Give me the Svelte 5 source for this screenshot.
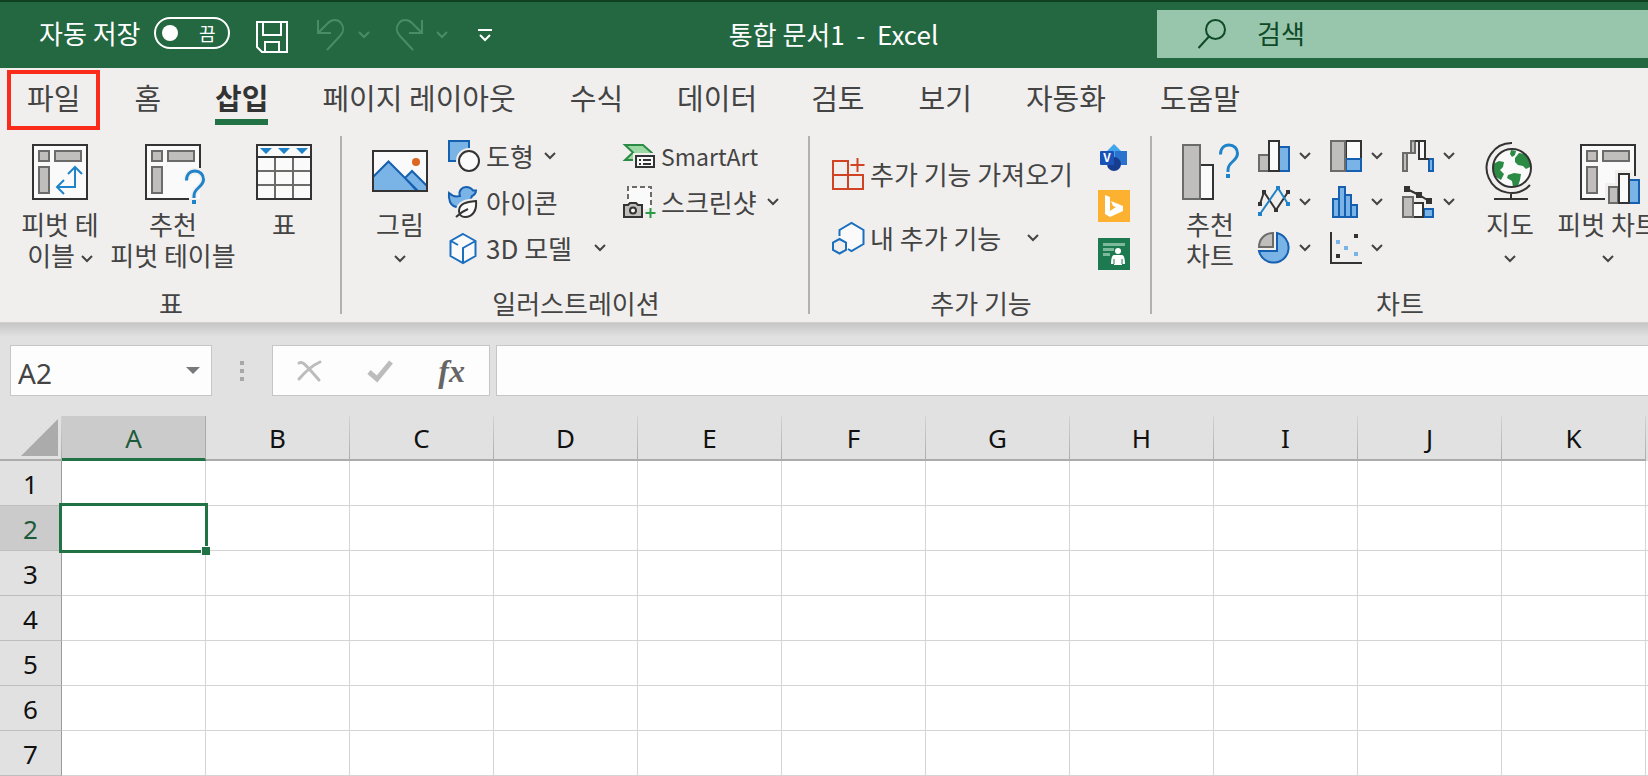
<script>
  const tabs = ['파일', '홈', '삽입', '페이지 레이아웃', '수식', '데이터', '검토', '보기', '자동화', '도움말'];
  const active = '삽입';
  const framed = '파일';
  const columns = ['A', 'B', 'C', 'D', 'E', 'F', 'G', 'H', 'I', 'J', 'K'];
  const rows = [1, 2, 3, 4, 5, 6, 7];
  const selected = { column: 'A', row: 2 };
  let cellName = $state('A2');
  let formula = $state('');
  let autosave = $state(false);
</script>

{#snippet chevron()}
  <svg class="chevron" width="12" height="8" viewBox="0 0 12 8" aria-hidden="true"><path d="M1 1l5 5 5-5" /></svg>
{/snippet}

{#snippet question(x, y)}
  <g transform="translate({x} {y})">
    <path class="halo" d="M1.500 10.500C1.500 4.500 5 1 10 1s8.500 3.500 8.500 8.500C18.500 17 9 18 9 25.500V28" />
    <path class="azure bold" d="M1.500 10.500C1.500 4.500 5 1 10 1s8.500 3.500 8.500 8.500C18.500 17 9 18 9 25.500V28" />
    <rect x="7" y="30" width="4" height="4" fill="#1e83c9" />
  </g>
{/snippet}

{#snippet pivotBlocks()}
  <g class="gray">
    <rect x="7" y="7" width="10" height="10" />
    <rect x="23" y="7" width="26" height="10" />
    <rect x="7" y="23" width="10" height="26" />
  </g>
{/snippet}

<div class="app">
  <header class="titlebar">
    <div class="quick">
      <label class="autosave">
        <span class="caption">자동 저장</span>
        <input type="checkbox" role="switch" bind:checked={autosave} />
        <span class="switch"><i></i><b>끔</b></span>
      </label>
      <button class="save" aria-label="저장">
        <svg width="32" height="32" viewBox="0 0 32 32"><path d="M1 1h30v30H6l-5-5zM7 1v13h18V1M9 31V21h14v10" /></svg>
      </button>
      <button class="faded" aria-label="실행 취소">
        <svg width="30" height="34" viewBox="0 0 30 34"><path d="M2 2v13h13M2 15L12 5c4-4 10-4 13 0s3 9-1 13L11 32" /></svg>
        {@render chevron()}
      </button>
      <button class="faded redo" aria-label="다시 실행">
        <svg width="30" height="34" viewBox="0 0 30 34"><path d="M28 2v13H15M28 15L18 5C14 1 8 1 5 5s-3 9 1 13l13 14" /></svg>
        {@render chevron()}
      </button>
      <button class="more" aria-label="빠른 실행 도구 모음">
        <svg width="14" height="14" viewBox="0 0 14 14"><path d="M0 2h14M2 7l5 5 5-5" /></svg>
      </button>
    </div>
    <h1>통합 문서1 &nbsp;- &nbsp;Excel</h1>
    <label class="search">
      <svg width="30" height="32" viewBox="0 0 30 32" aria-hidden="true"><circle cx="18.500" cy="11.500" r="9.500" /><path d="M12 18.500L1.500 30" /></svg>
      <input type="search" placeholder="검색" aria-label="검색" />
    </label>
  </header>

  <nav class="tabs">
    {#each tabs as tab}
      <button class:framed={tab === framed} class:active={tab === active}><span>{tab}</span></button>
    {/each}
  </nav>

  <div class="ribbon">
    <section class="group tables">
      <div class="body">
        <button class="big">
          <svg width="56" height="56" viewBox="0 0 56 56"><rect class="white" x="1" y="1" width="54" height="54" />{@render pivotBlocks()}<path class="azure" d="M43 23v20H25M36 30l7-7 7 7M32 36l-7 7 7 7" /></svg>
          <span>피벗 테<br />이블 {@render chevron()}</span>
        </button>
        <button class="big wide">
          <svg width="56" height="56" viewBox="0 0 56 56"><rect x="1" y="1" width="54" height="54" fill="#fafafa" />{@render pivotBlocks()}<path class="dark" d="M55 24V1H1v54h43" />{@render question(40, 26)}</svg>
          <span>추천<br />피벗 테이블</span>
        </button>
        <button class="big">
          <svg width="56" height="56" viewBox="0 0 56 56">
            <rect x="1" y="1" width="54" height="54" fill="#fafafa" />
            <path d="M19 14v41M37 14v41M1 27h54M1 41h54" fill="none" stroke="#6b6b69" stroke-width="2" />
            <path class="dark" d="M1 1h54v54H1zM1 13h54" />
            <path d="M4 4h12l-6 6zM22 4h12l-6 6zM40 4h12l-6 6z" fill="#1e83c9" />
          </svg>
          <span>표</span>
        </button>
      </div>
      <h2>표</h2>
    </section>

    <section class="group pictures">
      <div class="body">
        <button class="big">
          <svg width="56" height="56" viewBox="0 0 56 56">
            <rect x="1" y="7" width="54" height="40" fill="#fafafa" />
            <circle cx="44" cy="18" r="4" fill="#dd6620" />
            <path class="blue" d="M33 34l7-7 15 15v5H45zM1 33l15.500-15.500L46 47H1z" />
            <rect class="dark" x="1" y="7" width="54" height="40" />
          </svg>
          <span>그림<br />{@render chevron()}</span>
        </button>
        <div class="rows first">
          <button>
            <svg width="32" height="32" viewBox="0 0 32 32"><rect class="blue" x="1" y="1" width="20" height="20" /><circle cx="21" cy="21" r="13" fill="#f1efee" /><circle class="white" cx="21" cy="21" r="10" /></svg>
            <span>도형</span>{@render chevron()}
          </button>
          <button>
            <svg width="32" height="32" viewBox="0 0 32 32">
              <path class="blue" d="M1 7c3 3 7 4 11 3C10 5 14 1 18 1c4 0 6 2 7 3.500h3C28 8 26 9 24 10c-1 5-5 8-9 11-6 1-11-1-13-5C1 13 .5 10 1 7z" />
              <path class="halo" d="M28 15c-9 1-17 2-17 10 0 4 3 6 6 6 8 0 12-7 11-16z" />
              <path class="white" d="M28 15c-9 1-17 2-17 10 0 4 3 6 6 6 8 0 12-7 11-16zM8 31c4-4 7-6 12-8" />
            </svg>
            <span>아이콘</span>
          </button>
          <button class="apart">
            <svg width="32" height="32" viewBox="0 0 32 32"><path d="M15 2l12.500 7v15L15 31 2.500 24V9z" fill="#fafafa" /><path class="line-blue" d="M15 2l12.500 7v15L15 31 2.500 24V9zM27.500 9L15 16v15M3 9l7 4" /></svg>
            <span>3D 모델</span>{@render chevron()}
          </button>
        </div>
        <div class="rows">
          <button>
            <svg width="32" height="32" viewBox="0 0 32 32"><path d="M2 5h18l9 8v1H12v6H2l8-7.500z" fill="#9bd8a4" stroke="#2b8a44" stroke-width="2" /><path class="halo" d="M13 16h18v11H13z" /><path class="white" d="M13 16h18v11H13z" /><path class="dark" d="M16 20h2M20 20h8M16 24h2M20 24h8" /></svg>
            <span class="latin">SmartArt</span>
          </button>
          <button>
            <svg width="32" height="32" viewBox="0 0 32 32">
              <rect x="5" y="1" width="23" height="22" fill="#fafafa" />
              <path d="M5 13V1h23v20" fill="none" stroke="#6b6b69" stroke-width="2" stroke-dasharray="5 3" />
              <path d="M1 19h4l2-2h6l2 2h4v12H1z" fill="#bfbebc" stroke="#333" stroke-width="2" />
              <circle class="white" cx="10" cy="24.500" r="3" />
              <path d="M27.500 22v10M22.500 27h10" stroke="#2b9a48" stroke-width="2" />
            </svg>
            <span>스크린샷</span>{@render chevron()}
          </button>
        </div>
      </div>
      <h2>일러스트레이션</h2>
    </section>

    <section class="group addins">
      <div class="body">
        <div class="rows tall">
          <button>
            <svg width="32" height="32" viewBox="0 0 32 32"><path d="M1 3h15v28H1zM1 17h30v14H1zM25.500 0v14M18.500 7h14" fill="none" stroke="#d04424" stroke-width="2" /></svg>
            <span>추가 기능 가져오기</span>
          </button>
          <button class="apart">
            <svg width="32" height="32" viewBox="0 0 32 32"><path d="M7.500 14V8l12-7L32 8v14l-12.500 7-3.500-2z" fill="#fafafa" /><path class="line-blue" d="M7.500 14V8l12-7L31.500 8v14l-12 7-3.500-2M7.500 17l6.500 3.500v7.500l-6.500 3.500L1 28v-7.500z" /></svg>
            <span>내 추가 기능</span>{@render chevron()}
          </button>
        </div>
        <div class="apps">
          <button aria-label="Visio">
            <svg width="32" height="32" viewBox="0 0 32 32"><path d="M16 2l8 8-8 8-8-8z" fill="#41a5ee" /><path d="M17 9h12v14H17z" fill="#2b72cf" /><circle cx="16" cy="22" r="7" fill="#163d8f" /><rect x="2" y="9" width="14" height="14" rx="1" fill="#1a52b8" /><text x="9" y="20" text-anchor="middle" font-size="12" font-weight="700" fill="#fff">V</text></svg>
          </button>
          <button aria-label="Bing 지도">
            <svg width="32" height="32" viewBox="0 0 32 32"><path d="M0 0h32v32H0z" fill="#fcb131" /><path d="M7 5l5 2v14l6-4-3-1-2-5 12 5v5l-13 6-5-3z" fill="#fff" /></svg>
          </button>
          <button aria-label="피플 그래프">
            <svg width="32" height="32" viewBox="0 0 32 32"><path d="M0 0h32v32H0z" fill="#1d7a50" /><path d="M5 6.500h22M5 11.500h11M5 16.500h7" stroke="#7db99b" stroke-width="3" /><circle cx="20" cy="13" r="3" fill="#fff" /><path d="M16 17h8c2 0 3 4 3 9h-3v1h-8v-1h-3c0-5 1-9 3-9z" fill="#fff" /><path d="M16 21v5M24 21v5" stroke="#1d7a50" /></svg>
          </button>
        </div>
      </div>
      <h2>추가 기능</h2>
    </section>

    <section class="group charts">
      <div class="body">
        <button class="big">
          <svg width="56" height="56" viewBox="0 0 56 56"><rect class="white" x="18" y="21" width="13" height="34" /><rect class="gray" x="1" y="1" width="17" height="54" />{@render question(37, 0)}</svg>
          <span>추천<br />차트</span>
        </button>
        <div class="gallery">
          <button aria-label="세로 막대형 차트">
            <svg width="32" height="32" viewBox="0 0 32 32"><path class="gray" d="M1 15h10v16H1z" /><path class="blue" d="M21 7h10v24H21z" /><path class="white" d="M11 1h10v30H11z" /></svg>{@render chevron()}
          </button>
          <button aria-label="계층 구조 차트">
            <svg width="32" height="32" viewBox="0 0 32 32"><path class="white" d="M16 1h15v18H16z" /><path class="blue" d="M16 19h15v12H16z" /><path class="gray" d="M1 1h14v30H1z" /></svg>{@render chevron()}
          </button>
          <button aria-label="폭포 차트">
            <svg width="32" height="32" viewBox="0 0 32 32"><path class="gray" d="M1 13h4v18H1zM9 1h4v12H9zM5 13h4" /><path class="blue" d="M27 19h4v12h-4z" /><path class="white" d="M17 1h6v18h-6zM13 1h4M23 19h4" /></svg>{@render chevron()}
          </button>
          <button aria-label="꺾은선형 차트">
            <svg width="32" height="32" viewBox="0 0 32 32"><path class="dark" d="M2 18L6 6l12 18L30 6" /><path class="azure" d="M2 28L20 2l10 16" /><path d="M0 16h4v4H0zM4 4h4v4H4zM16 22h4v4h-4zM28 4h4v4h-4z" fill="#333" /><path d="M0 26h4v4H0zM18 0h4v4h-4zM28 16h4v4h-4z" fill="#1e83c9" /></svg>{@render chevron()}
          </button>
          <button aria-label="통계 차트">
            <svg width="32" height="32" viewBox="0 0 32 32"><path class="blue" d="M3 13h6v18H3zM9 1h6v30H9zM15 9h6v22h-6zM21 19h6v12h-6z" /></svg>{@render chevron()}
          </button>
          <button aria-label="혼합 차트">
            <svg width="32" height="32" viewBox="0 0 32 32"><path class="blue" d="M22 23h9v8h-9z" /><path class="white" d="M11 17h10v14H11z" /><path class="gray" d="M1 11h10v20H1z" /><path class="dark" d="M5 3l12 6 10 6" /><path d="M2 0h6v6H2zM14 6h6v6h-6zM24 12h6v6h-6z" fill="#333" /></svg>{@render chevron()}
          </button>
          <button aria-label="원형 차트">
            <svg width="32" height="32" viewBox="0 0 32 32"><path class="gray" d="M15 15V1C7 1 1 7 1 15z" /><path class="blue" d="M19 1v18H1a15 15 0 1 0 18-18z" /></svg>{@render chevron()}
          </button>
          <button aria-label="분산형 차트">
            <svg width="32" height="32" viewBox="0 0 32 32"><path class="dark" d="M1 0v31h31" /><path d="M24 2h4v4h-4zM6 22h4v4H6z" fill="#333" /><path d="M6 8h4v4H6zM14 14h4v4h-4zM24 20h4v4h-4z" fill="#7ab3e5" /></svg>{@render chevron()}
          </button>
        </div>
        <button class="big">
          <svg width="56" height="56" viewBox="0 0 56 56">
            <circle cx="30" cy="24" r="19" fill="#fafafa" />
            <path d="M29 6l5 1-1 4-3 2-2-3zM33 14l4-5 6 1 5 7v6l-4 2-3-3-5-1-3-3zM11 20l6-3 5 1-1 5-3 3 4 4-3 6-5-3-3-7zM26 31l6-2 7 1-1 6-2 6-5 1-1-6-5-3z" fill="#2b8a44" />
            <circle class="dark" cx="30" cy="24" r="19" />
            <path class="dark" d="M30-1a25 25 0 1 0 18 42M29 49v6M12 55h34" />
          </svg>
          <span>지도<br />{@render chevron()}</span>
        </button>
        <button class="big wide">
          <svg width="56" height="56" viewBox="0 0 56 56"><path d="M1 1h54v54H1z" fill="#fafafa" />{@render pivotBlocks()}<path class="dark" d="M55 32V1H1v54h25" /><path class="halo" d="M28 42h10V29h12v6h9v24H28z" /><path class="gray" d="M29 43h9v16h-9z" /><path class="blue" d="M49 36h10v23H49z" /><path class="white" d="M39 30h10v29H39z" /></svg>
          <span>피벗 차트<br />{@render chevron()}</span>
        </button>
      </div>
      <h2>차트</h2>
    </section>
  </div>

  <div class="formulabar">
    <div class="namebox">
      <input aria-label="이름 상자" bind:value={cellName} />
      <button aria-label="이름 목록"><svg width="14" height="7" viewBox="0 0 14 7"><path d="M0 0h14L7 7z" fill="#777a7d" /></svg></button>
    </div>
    <div class="grip"><i></i><i></i><i></i></div>
    <div class="actions">
      <button aria-label="취소"><svg width="24" height="22" viewBox="0 0 24 22"><path d="M2 3c4-2 6 1 20 17M2 19C8 12 14 6 23 2" fill="none" stroke="#bcbcbc" stroke-width="3" stroke-linecap="round" /></svg></button>
      <button aria-label="입력"><svg width="26" height="22" viewBox="0 0 26 22"><path d="M2 12l8 7L24 2" fill="none" stroke="#bcbcbc" stroke-width="5" /></svg></button>
      <button class="fx" aria-label="함수 삽입">fx</button>
    </div>
    <input class="formula" aria-label="수식 입력줄" bind:value={formula} />
  </div>

  <table class="sheet">
    <colgroup>
      <col class="c-head" />
      {#each columns as c}<col class="c-cell" />{/each}
      <col />
    </colgroup>
    <thead>
      <tr>
        <th class="corner"><svg width="37" height="37" viewBox="0 0 37 37" aria-hidden="true"><path d="M37 0v37H0z" fill="#ababab" /></svg></th>
        {#each columns as c}<th scope="col" class:sel={c === selected.column}>{c}</th>{/each}
        <th class="rest"></th>
      </tr>
    </thead>
    <tbody>
      {#each rows as r}
        <tr>
          <th scope="row" class:sel={r === selected.row}>{r}</th>
          {#each columns as c}
            <td>{#if r === selected.row && c === selected.column}<div class="cursor"></div>{/if}</td>
          {/each}
          <td></td>
        </tr>
      {/each}
    </tbody>
  </table>
</div>

<style>
  :global(body) { background: #e1e1e1; overflow: hidden; }
  .app { font-family: "Noto Sans CJK KR", "Noto Sans", sans-serif; font-size: 26px; color: #444; overflow: hidden; }
  button { border: 0; padding: 0; background: none; font: inherit; color: inherit; cursor: pointer; }
  input { font: inherit; color: inherit; border: 0; padding: 0; background: none; outline: 0; min-width: 0; border-radius: 0; }
  svg { display: block; flex: none; overflow: visible; }
  h1, h2 { margin: 0; font-size: 26px; font-weight: 400; }

  .chevron path { fill: none; stroke: currentColor; stroke-width: 2; }
  .white { fill: #fafafa; stroke: #333; stroke-width: 2; }
  .dark { fill: none; stroke: #333; stroke-width: 2; }
  .gray, .gray rect { fill: #bfbebc; stroke: #6b6b69; stroke-width: 2; }
  .blue { fill: #7ab3e5; stroke: #1560b0; stroke-width: 2; }
  .line-blue { fill: none; stroke: #1b6fbf; stroke-width: 2; }
  .azure { fill: none; stroke: #1e83c9; stroke-width: 2; }
  .bold { stroke-width: 3; }
  .halo { fill: none; stroke: #f1efee; stroke-width: 6; }

  .titlebar { display: grid; grid-template-columns: 510px 1fr 491px; align-items: center; height: 66px; border-top: 2px solid #0f4020; background: #246841; color: #fff; }
  .quick { display: flex; align-items: center; padding-left: 39px; }
  .quick svg path { fill: none; stroke: currentColor; stroke-width: 2; }
  .autosave { display: flex; align-items: center; gap: 13px; line-height: 32px; }
  .autosave .caption { padding-bottom: 4px; }
  .autosave input { position: absolute; opacity: 0; }
  .switch { display: flex; align-items: center; justify-content: space-between; box-sizing: border-box; width: 76px; height: 32px; margin-bottom: 4px; padding: 0 12px 0 6px; border: 2px solid #fff; border-radius: 16px; }
  .switch i { width: 16px; height: 16px; border-radius: 50%; background: #fff; }
  .switch b { font-size: 18px; font-weight: 400; line-height: 28px; }
  .save { margin: 4px 28px 0 26px; }
  .faded { display: flex; align-items: center; gap: 12px; color: #4a8c63; margin-right: 24px; }
  .more { margin-left: 6px; }
  h1 { padding-bottom: 2px; text-align: center; white-space: pre; line-height: 36px; }
  .search { display: flex; align-items: center; gap: 30px; height: 48px; padding-left: 40px; margin-bottom: 2px; background: #98c6ad; color: #0f4a27; }
  .search svg * { fill: none; stroke: #0f4a27; stroke-width: 2; }
  .search input { flex: 1; padding-bottom: 4px; appearance: none; }
  .search input::placeholder { color: #0f4a27; opacity: 1; }

  .tabs { display: flex; gap: 14px; height: 65px; padding-left: 7px; box-sizing: border-box; padding-top: 2px; background: #f1efee; }
  .tabs button { box-sizing: border-box; height: 60px; padding: 0 16px; border: 4px solid transparent; font-size: 29px; line-height: 44px; white-space: nowrap; }
  .tabs span { display: block; height: 44px; border-bottom: 6px solid transparent; }
  .tabs .framed { border-color: #fb2b1b; }
  .tabs .active { font-weight: 700; color: #333; }
  .tabs .active span { border-color: #217346; }

  .ribbon { display: flex; background: #f1efee; border-bottom: 1px solid #d2d0ce; }
  .group { position: relative; box-sizing: border-box; flex: none; padding-left: 16px; padding-bottom: 1px; }
  .group:not(:last-child)::after { content: ""; position: absolute; right: 0; top: 3px; bottom: 8px; width: 2px; background: #b3b0ae; }
  .tables { width: 342px; }
  .pictures { width: 468px; }
  .addins { width: 342px; }
  .charts { flex: 1; min-width: 0; }
  .body { display: flex; height: 152px; }
  .group h2 { margin-left: -16px; text-align: center; line-height: 36px; }
  .tables .body { gap: 4px; }
  .big { display: flex; flex: none; flex-direction: column; align-items: center; justify-content: flex-start; width: 84px; padding-top: 11px; gap: 8px; line-height: 31px; white-space: nowrap; }
  .tables .big:first-child { width: 88px; }
  .big.wide { width: 130px; }
  .charts .big.wide { width: 112px; }
  .big .chevron { display: inline-block; vertical-align: middle; }
  .rows { display: flex; flex-direction: column; margin-left: 6px; }
  .rows.first { width: 169px; }
  .rows button { display: flex; align-items: center; gap: 6px; height: 46px; white-space: nowrap; line-height: 32px; }
  .rows .latin { font-size: 23px; }
  .rows .chevron { margin-left: 4px; }
  .rows .apart .chevron { margin-left: 16px; }
  .rows.tall { padding-top: 9px; width: 266px; }
  .rows.tall button { height: 64px; }
  .rows.tall .apart .chevron { margin-left: 20px; }
  .apps { display: flex; flex-direction: column; gap: 16px; padding-top: 9px; }
  .gallery { display: grid; grid-template-columns: 72px 72px 66px; grid-auto-rows: 46px; margin: 0 0 0 6px; }
  .gallery button { display: flex; align-items: center; gap: 9px; }

  .formulabar { display: flex; height: 51px; padding: 22px 0 20px 10px; background: linear-gradient(#c6c6c6, #e1e1e1 14px); color: #444; }
  .namebox, .actions, .formula { box-sizing: border-box; border: 1px solid #c6c6c6; background: #fdfdfd; }
  .namebox { display: flex; align-items: center; width: 202px; padding: 0 11px 0 7px; font-family: "Noto Sans", sans-serif; font-size: 28px; }
  .namebox input { flex: 1; width: 0; padding-top: 4px; }
  .grip { display: flex; flex-direction: column; justify-content: center; gap: 4px; margin: 0 28px; }
  .grip i { width: 4px; height: 4px; background: #a8a8a8; }
  .actions { display: flex; align-items: center; justify-content: space-between; width: 218px; padding: 0 24px; margin-right: 6px; }
  .fx { font-family: "Liberation Serif", serif; font-style: italic; font-weight: 700; font-size: 32px; line-height: 40px; color: #666; }
  .formula { flex: 1; border-right: 0; padding: 0 8px; }

  .sheet { width: 100%; table-layout: fixed; border-collapse: separate; border-spacing: 0; font-family: "Noto Sans", sans-serif; font-size: 26px; line-height: 40px; color: #111; background: #fff; }
  .c-head { width: 62px; }
  .c-cell { width: 144px; }
  th, td { box-sizing: border-box; height: 45px; padding: 0; font-weight: 400; }
  th { background: #e1e1e1; text-align: center; }
  thead th { border-bottom: 2px solid #ababab; border-right: 1px solid; border-image: linear-gradient(#d4d4d4, #ababab) 1; }
  thead .corner { vertical-align: bottom; border-right-color: #ababab; }
  .corner svg { margin: 0 3px 3px auto; }
  thead .rest { border-right: 0; }
  thead .sel { padding-top: 1px; border-image: none; border-right-color: #ababab; border-bottom: 3px solid #217346; }
  tbody th { padding-top: 2px; border-right: 1px solid #9a9a9a; border-bottom: 1px solid #bdbdbd; }
  th.sel { background: #cbcbcb; color: #1d5a3a; }
  td { position: relative; border-right: 1px solid #d4d4d4; border-bottom: 1px solid #d4d4d4; }
  td:last-child { border-right: 0; }
  .cursor { position: absolute; z-index: 1; inset: -3px; border: 3px solid #217346; }
  .cursor::after { content: ""; position: absolute; right: -5px; bottom: -5px; width: 8px; height: 8px; background: #217346; border: solid #fff; border-width: 1px 0 0 1px; }
</style>
